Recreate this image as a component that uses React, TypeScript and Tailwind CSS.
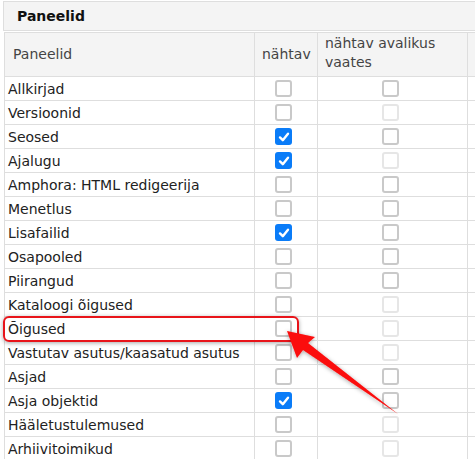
const rows: { name: string; on: boolean; pub: 'on' | 'off' }[] = [
  { name: 'Allkirjad', on: false, pub: 'on' },
  { name: 'Versioonid', on: false, pub: 'off' },
  { name: 'Seosed', on: true, pub: 'on' },
  { name: 'Ajalugu', on: true, pub: 'off' },
  { name: 'Amphora: HTML redigeerija', on: false, pub: 'on' },
  { name: 'Menetlus', on: false, pub: 'on' },
  { name: 'Lisafailid', on: true, pub: 'on' },
  { name: 'Osapooled', on: false, pub: 'on' },
  { name: 'Piirangud', on: false, pub: 'on' },
  { name: 'Kataloogi õigused', on: false, pub: 'off' },
  { name: 'Õigused', on: false, pub: 'off' },
  { name: 'Vastutav asutus/kaasatud asutus', on: false, pub: 'off' },
  { name: 'Asjad', on: false, pub: 'on' },
  { name: 'Asja objektid', on: true, pub: 'on' },
  { name: 'Hääletustulemused', on: false, pub: 'off' },
  { name: 'Arhiivitoimikud', on: false, pub: 'off' },
]

function Box({ checked, disabled }: { checked?: boolean; disabled?: boolean }) {
  if (checked) {
    return (
      <span className="inline-flex w-[17px] h-[17px] rounded-[3px] bg-[#0a7cf8] items-center justify-center align-middle">
        <svg width="12" height="12" viewBox="0 0 12 12">
          <path d="M2 6.4 L4.8 9.2 L10 2.8" fill="none" stroke="#fff" strokeWidth="2.4" strokeLinecap="round" strokeLinejoin="round" />
        </svg>
      </span>
    )
  }
  return (
    <span
      className={
        'inline-block w-[17px] h-[17px] rounded-[3px] border-2 align-middle bg-white ' +
        (disabled ? 'border-[#e6e6e6]' : 'border-[#c9c9c9]')
      }
    />
  )
}

export default function App() {
  return (
    <div className="relative w-[475px] h-[459px] overflow-hidden bg-white text-[14px] text-[#222]" style={{ fontFamily: '"DejaVu Sans", Verdana, sans-serif' }}>
      <div className="mt-[1px] ml-[3px] w-[520px] h-[30px] bg-[#f4f4f4] border border-[#dedede] flex items-center pl-[13px] font-bold text-[#111]">
        Paneelid
      </div>
      <table className="mt-[1px] ml-[4px] border-collapse table-fixed w-[560px]">
        <colgroup>
          <col className="w-[250px]" />
          <col className="w-[63px]" />
          <col className="w-[150px]" />
          <col className="w-[97px]" />
        </colgroup>
        <thead>
          <tr className="h-[44px] bg-[#f4f4f4] text-[#444]">
            <th className="border border-[#dedede] font-normal text-left pl-[8px] leading-[19px]">Paneelid</th>
            <th className="border border-[#dedede] font-normal text-left pl-[7px] leading-[19px]">nähtav</th>
            <th className="border border-[#dedede] font-normal text-left pl-[7px] pb-[3px] leading-[19px]">nähtav avalikus vaates</th>
            <th className="border border-[#dedede]"></th>
          </tr>
        </thead>
        <tbody>
          {rows.map((r) => (
            <tr key={r.name} className="h-[24px]">
              <td className="border border-[#dedede] pl-[3px] leading-[18px] whitespace-nowrap">{r.name}</td>
              <td className="border border-[#dedede] text-center pr-[5px] leading-none">
                <Box checked={r.on} />
              </td>
              <td className="border border-[#dedede] text-center pr-[5px] leading-none">
                <Box disabled={r.pub === 'off'} />
              </td>
              <td className="border border-[#dedede]"></td>
            </tr>
          ))}
        </tbody>
      </table>

      <div className="absolute left-[3px] top-[316px] w-[296px] h-[26px] rounded-[6px] border-2 border-[#e8141a] shadow-[0_1px_4px_rgba(0,0,0,0.35)]" />

      <svg className="absolute left-0 top-0 pointer-events-none" width="475" height="459" viewBox="0 0 475 459">
        <defs>
          <filter id="sh" x="-20%" y="-20%" width="140%" height="140%">
            <feDropShadow dx="0" dy="1" stdDeviation="2" floodColor="#000" floodOpacity="0.35" />
          </filter>
        </defs>
        <polygon
          points="287,331 315,337 308,343 398,414 303,350 297,358"
          fill="#fb0a0a"
          filter="url(#sh)"
        />
      </svg>
    </div>
  )
}
